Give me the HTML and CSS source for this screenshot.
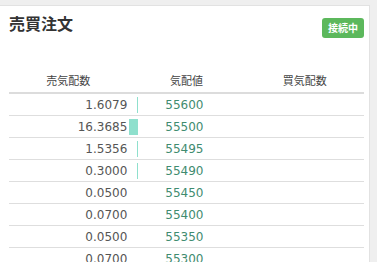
FILE: index.html
```html
<!DOCTYPE html>
<html lang="ja">
<head>
    <meta charset="UTF-8">
    <title>売買注文</title>
    <link rel="stylesheet" href="styles.css">
</head>
<body>

<div class="panel">
    <div class="panel-header">
        <h2>売買注文</h2>
        <span class="badge">接続中</span>
    </div>

    <table class="board">
        <thead>
            <tr>
                <th>売気配数</th>
                <th>気配値</th>
                <th>買気配数</th>
            </tr>
        </thead>
        <tbody>
            <tr>
                <td class="ask"><span class="qty">1.6079</span><span class="depth"><span class="bar" style="width: 1px"></span></span></td>
                <td class="price">55600</td>
                <td></td>
            </tr>
            <tr>
                <td class="ask"><span class="qty">16.3685</span><span class="depth"><span class="bar" style="width: 9px"></span></span></td>
                <td class="price">55500</td>
                <td></td>
            </tr>
            <tr>
                <td class="ask"><span class="qty">1.5356</span><span class="depth"><span class="bar" style="width: 1px"></span></span></td>
                <td class="price">55495</td>
                <td></td>
            </tr>
            <tr>
                <td class="ask"><span class="qty">0.3000</span><span class="depth"><span class="bar" style="width: 1px"></span></span></td>
                <td class="price">55490</td>
                <td></td>
            </tr>
            <tr>
                <td class="ask"><span class="qty">0.0500</span><span class="depth"></span></td>
                <td class="price">55450</td>
                <td></td>
            </tr>
            <tr>
                <td class="ask"><span class="qty">0.0700</span><span class="depth"></span></td>
                <td class="price">55400</td>
                <td></td>
            </tr>
            <tr>
                <td class="ask"><span class="qty">0.0500</span><span class="depth"></span></td>
                <td class="price">55350</td>
                <td></td>
            </tr>
            <tr>
                <td class="ask"><span class="qty">0.0700</span><span class="depth"></span></td>
                <td class="price">55300</td>
                <td></td>
            </tr>
        </tbody>
    </table>
</div>

</body>
</html>
```

FILE: styles.css
```css
body {
    margin: 0;
    padding: 5px 7px 0 0;
    background-color: #efefef;
    font-family: 'DejaVu Sans', Verdana, 'Noto Sans CJK JP', sans-serif;
    color: #555;
    height: 262px;
    overflow: hidden;
    box-sizing: border-box;
}

.panel {
    background-color: #ffffff;
    border: 1px solid #e2e2e2;
    border-left: none;
    padding: 0 5px 0 9px;
    height: 300px;
}

.panel-header {
    display: flex;
    justify-content: space-between;
    align-items: flex-start;
    height: 62px;
}

.panel-header h2 {
    margin: 5px 0 0;
    font-family: 'Noto Sans CJK JP', sans-serif;
    font-size: 16px;
    font-weight: bold;
    color: #333;
    line-height: 24px;
}

.badge {
    margin-top: 12px;
    background-color: #5cb85c;
    color: #ffffff;
    font-family: 'Noto Sans CJK JP', sans-serif;
    font-size: 10px;
    font-weight: bold;
    padding: 2px 6px;
    line-height: 16px;
    border-radius: 3px;
}

.board {
    width: 100%;
    border-collapse: collapse;
    table-layout: fixed;
    font-size: 12px;
}

.board th {
    font-family: 'Noto Sans CJK JP', sans-serif;
    font-weight: normal;
    font-size: 11px;
    color: #444;
    height: 24px;
    padding: 0;
    line-height: 24px;
    border-bottom: 2px solid #dcdcdc;
}

.board td {
    height: 21px;
    padding: 0;
    border-bottom: 1px solid #dedede;
}

.ask {
    text-align: right;
}

.qty {
    vertical-align: middle;
}

.depth {
    display: inline-block;
    width: 10px;
    height: 16px;
    margin: 0 -11px 0 1px;
    vertical-align: middle;
}

.bar {
    display: block;
    height: 16px;
    margin-left: auto;
    background-color: #8fe0cd;
}

.price {
    color: #3f8c70;
    padding-left: 38px !important;
}
```
